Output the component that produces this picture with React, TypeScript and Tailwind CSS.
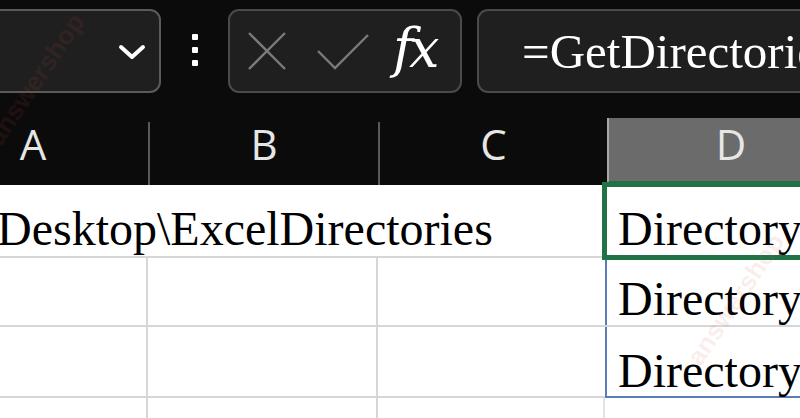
import React from "react";

const serif = { fontFamily: '"Liberation Serif", "Times New Roman", serif' };

function Chevron() {
  return (
    <svg width="28" height="16" viewBox="0 0 28 16" fill="none">
      <path d="M3 3 L14 13 L25 3" stroke="#ffffff" strokeWidth="4" strokeLinecap="round" strokeLinejoin="round" />
    </svg>
  );
}

function XIcon() {
  return (
    <svg width="40" height="40" viewBox="0 0 40 40" fill="none">
      <path d="M2 2 L38 38 M38 2 L2 38" stroke="#7b7b7b" strokeWidth="2.4" />
    </svg>
  );
}

function CheckIcon() {
  return (
    <svg width="52" height="38" viewBox="0 0 52 38" fill="none">
      <path d="M1 18 L18 35 L51 2" stroke="#7b7b7b" strokeWidth="2.4" />
    </svg>
  );
}

export default function App() {
  return (
    <div className="relative w-[800px] h-[418px] overflow-hidden bg-[#0b0b0b]">
      {/* Toolbar */}
      <div className="flex h-[118px] items-start pt-[9px]">
        <div className="ml-[-20px] flex h-[84px] w-[181px] shrink-0 items-center justify-end rounded-[11px] border-2 border-[#5a5a5a] bg-[#1f1f1f] pr-[13px] pt-[2px]">
          <Chevron />
        </div>
        <div className="flex h-[84px] w-[67px] shrink-0 flex-col items-center justify-center gap-[7px] pb-[2px]">
          <span className="h-[6px] w-[6px] rounded-[1px] bg-white" />
          <span className="h-[6px] w-[6px] rounded-[1px] bg-white" />
          <span className="h-[6px] w-[6px] rounded-[1px] bg-white" />
        </div>
        <div className="flex h-[84px] w-[234px] shrink-0 items-center rounded-[11px] border-2 border-[#4a4a4a] bg-[#1f1f1f] pl-[17px]">
          <XIcon />
          <div className="ml-[30px] mt-[1px]">
            <CheckIcon />
          </div>
          <span
            className="ml-[24px] mt-[-4px] text-[54px] italic leading-none text-white"
            style={{ fontFamily: '"DejaVu Serif", "Liberation Serif", serif', letterSpacing: "-4px" }}
          >
            fx
          </span>
        </div>
        <div className="ml-[15px] flex h-[84px] w-[380px] shrink-0 items-center rounded-[11px] border-2 border-[#4a4a4a] bg-[#1f1f1f] pl-[43px]">
          <span className="whitespace-nowrap text-[49px] leading-none text-white" style={serif}>
            =GetDirectories(A1)
          </span>
        </div>
      </div>

      {/* Column headers */}
      <div
        className="ml-[-82px] flex h-[67px] text-[42px] leading-none text-[#e6e6e6]"
        style={{ fontFamily: '"Open Sans", "Noto Sans", sans-serif' }}
      >
        <div className="flex w-[230px] shrink-0 items-center justify-center pb-[16px]">
          <span>A</span>
        </div>
        <div className="mt-[4px] w-[2px] shrink-0 bg-[#5a5a5a]" />
        <div className="flex w-[228px] shrink-0 items-center justify-center pb-[16px]">
          <span>B</span>
        </div>
        <div className="mt-[4px] w-[2px] shrink-0 bg-[#5a5a5a]" />
        <div className="flex w-[227px] shrink-0 items-center justify-center pb-[16px]">
          <span>C</span>
        </div>
        <div className="flex w-[300px] shrink-0 items-center justify-center border-b-[4px] border-l-2 border-b-[#237046] border-l-[#a8a8a8] bg-[#6b6b6b] pb-[12px] pr-[54px]">
          <span>D</span>
        </div>
      </div>

      {/* Grid */}
      <div className="bg-white" style={serif}>
        {/* Row 1 */}
        <div className="ml-[-82px] flex h-[73px] border-b-2 border-[#d6d6d6] text-[48px] leading-none text-black">
          <div className="flex w-[687px] shrink-0 items-end pb-[3px] pl-[79px]">
            <span className="whitespace-nowrap">Desktop\ExcelDirectories</span>
          </div>
          <div className="relative flex w-[300px] shrink-0 items-end border-l-2 border-[#5b7db5] pb-[3px] pl-[11px]">
            <span className="whitespace-nowrap">Directory1</span>
            <div className="pointer-events-none absolute left-[-5px] top-[-3px] h-[78px] w-[320px] border-[5px] border-[#217346]" />
          </div>
        </div>
        {/* Row 2 */}
        <div className="ml-[-82px] flex h-[69px] border-b-2 border-[#d6d6d6] text-[48px] leading-none text-black">
          <div className="w-[230px] shrink-0 border-r-2 border-[#d6d6d6]" />
          <div className="w-[230px] shrink-0 border-r-2 border-[#d6d6d6]" />
          <div className="w-[227px] shrink-0" />
          <div className="flex w-[300px] shrink-0 items-end border-l-2 border-[#5b7db5] pb-[2px] pl-[11px]">
            <span className="whitespace-nowrap">Directory2</span>
          </div>
        </div>
        {/* Row 3 */}
        <div className="ml-[-82px] flex h-[71px] border-b-2 border-[#d6d6d6] text-[48px] leading-none text-black">
          <div className="w-[230px] shrink-0 border-r-2 border-[#d6d6d6]" />
          <div className="w-[230px] shrink-0 border-r-2 border-[#d6d6d6]" />
          <div className="w-[227px] shrink-0" />
          <div className="mb-[-2px] flex w-[300px] shrink-0 items-end border-b-2 border-l-2 border-[#5b7db5] pb-[1px] pl-[11px]">
            <span className="whitespace-nowrap">Directory3</span>
          </div>
        </div>
        {/* Row 4 */}
        <div className="ml-[-82px] flex h-[40px]">
          <div className="w-[230px] shrink-0 border-r-2 border-[#d6d6d6]" />
          <div className="w-[230px] shrink-0 border-r-2 border-[#d6d6d6]" />
          <div className="w-[227px] shrink-0 border-r-2 border-[#e4e4e4]" />
          <div className="w-[300px] shrink-0" />
        </div>
      </div>

      {/* Watermarks */}
      <span
        className="pointer-events-none absolute left-[-40px] top-[60px] -rotate-[56deg] whitespace-nowrap text-[26px] font-bold text-[#b0402f]/15"
        style={{ fontFamily: '"Liberation Sans", Arial, sans-serif' }}
      >
        answershop
      </span>
      <span
        className="pointer-events-none absolute left-[660px] top-[280px] -rotate-[56deg] whitespace-nowrap text-[26px] font-bold text-[#d04a3a]/10"
        style={{ fontFamily: '"Liberation Sans", Arial, sans-serif' }}
      >
        answershop
      </span>
    </div>
  );
}
